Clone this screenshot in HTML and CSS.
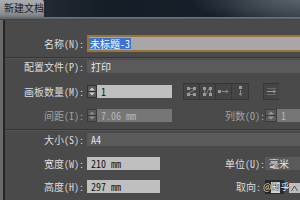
FILE: index.html
```html
<!DOCTYPE html>
<html lang="zh-CN">
<head>
<meta charset="utf-8">
<title>新建文档</title>
<link rel="stylesheet" href="styles.css">
</head>
<body>
<div class="win">
  <div class="titlebar"><div class="tab">新建文档</div></div>
  <div class="frame-top"></div>
  <div class="frame">
    <div class="panel">
      <div class="row row-name">
        <span class="lbl">名称(N):</span>
        <div class="name-field"><span class="sel">未标题-3</span></div>
      </div>
      <div class="sep sep1"></div>
      <div class="row">
        <span class="lbl">配置文件(P):</span>
        <div class="field drop grow">打印</div>
      </div>
      <div class="row row-tall mt10">
        <span class="lbl">画板数量(M):</span>
        <svg class="spin" width="10" height="13" viewBox="0 0 10 13"><rect x="0.5" y="0.5" width="9" height="12" fill="#5a5a5a" stroke="#333"/><path d="M2 5.5L5 2.5L8 5.5Z M2 7.5L5 10.5L8 7.5Z" fill="#cfcfcf"/><path d="M1 6.5H9" stroke="#333"/></svg>
        <div class="field light w75">1</div>
        <div class="btngroup">
          <span class="btn"><svg width="15" height="15" viewBox="0 0 15 15"><g fill="#9a9a9a"><rect x="3" y="3" width="3" height="3"/><rect x="9" y="3" width="3" height="3"/><rect x="3" y="9" width="3" height="3"/><rect x="9" y="9" width="3" height="3"/></g><path d="M6 4.5H9M6 10.5H9M10.5 6L4.5 9" stroke="#7c7c7c" stroke-width="1"/></svg></span>
          <span class="btn"><svg width="15" height="15" viewBox="0 0 15 15"><g fill="#9a9a9a"><rect x="3" y="3" width="3" height="3"/><rect x="9" y="3" width="3" height="3"/><rect x="3" y="9" width="3" height="3"/><rect x="9" y="9" width="3" height="3"/></g><path d="M4.5 6V9M10.5 6V9M6 10.5L9 4.5" stroke="#7c7c7c" stroke-width="1"/></svg></span>
          <span class="btn"><svg width="15" height="15" viewBox="0 0 15 15"><rect x="2" y="6" width="3" height="3" fill="#9a9a9a"/><path d="M6 7.5H11" stroke="#8a8a8a"/><path d="M10 5.5L12.5 7.5L10 9.5Z" fill="#8a8a8a"/></svg></span>
          <span class="btn"><svg width="15" height="15" viewBox="0 0 15 15"><rect x="6" y="2" width="3" height="3" fill="#9a9a9a"/><path d="M7.5 6V10" stroke="#8a8a8a"/><path d="M5.5 9.5L7.5 12L9.5 9.5Z" fill="#8a8a8a"/></svg></span>
        </div>
        <span class="btn single"><svg width="15" height="15" viewBox="0 0 15 15"><path d="M3 4.5H12M3 10.5H12" stroke="#6a6a6a"/><path d="M3 7.5H10" stroke="#9a9a9a"/><path d="M9.5 5.5L12 7.5L9.5 9.5Z" fill="#9a9a9a"/></svg></span>
      </div>
      <div class="row mt9">
        <span class="lbl dim">间距(I):</span>
        <svg class="spin" width="10" height="13" viewBox="0 0 10 13"><rect x="0.5" y="0.5" width="9" height="12" fill="#575757" stroke="#3a3a3a"/><path d="M2 5.5L5 2.5L8 5.5Z M2 7.5L5 10.5L8 7.5Z" fill="#8e8e8e"/><path d="M1 6.5H9" stroke="#3a3a3a"/></svg>
        <div class="field dis w75">7.06 mm</div>
        <div class="right">
          <span class="lbl2 dim">列数(O):</span>
          <svg class="spin" width="12" height="13" viewBox="0 0 12 13"><rect x="0.5" y="0.5" width="11" height="12" fill="#5c5c5c" stroke="#3a3a3a"/><path d="M3 5.5L6 2.5L9 5.5Z M3 7.5L6 10.5L9 7.5Z" fill="#9a9a9a"/><path d="M1 6.5H11" stroke="#3a3a3a"/></svg>
          <div class="field dis grow">1</div>
        </div>
      </div>
      <div class="sep sep2"></div>
      <div class="row">
        <span class="lbl">大小(S):</span>
        <div class="field drop grow">A4</div>
      </div>
      <div class="row mt11">
        <span class="lbl">宽度(W):</span>
        <div class="field light w73">210 mm</div>
        <div class="right">
          <span class="lbl2">单位(U):</span>
          <div class="field drop grow">毫米</div>
        </div>
      </div>
      <div class="row mt10">
        <span class="lbl">高度(H):</span>
        <div class="field light w73">297 mm</div>
        <div class="right right-or">
          <span class="lbl2">取向:</span>
          <svg class="orient" width="35" height="14" viewBox="0 0 35 14"><rect x="0" y="0" width="19" height="14" fill="#2a2a2a"/><rect x="6" y="2" width="9" height="11" fill="#d6d6d6"/><path d="M8 10L10.5 5L13 10" stroke="#444" fill="none"/><path d="M19.5 6H23M19.5 8.5H23" stroke="#cfcfcf"/><rect x="24" y="3" width="11" height="10" fill="#bdbdbd"/><path d="M26.5 11L29.5 6L32.5 11" stroke="#555" fill="none"/></svg>
        </div>
      </div>
      <span class="wm">@知乎</span>
    </div>
  </div>
</div>
</body>
</html>
```

FILE: styles.css
```css
* {
  box-sizing: border-box;
  margin: 0;
  padding: 0;
}

html,
body {
  width: 300px;
  height: 200px;
  overflow: hidden;
  background: #4a4a4a;
}

body {
  font-family: "Noto Sans Mono CJK SC", "Liberation Mono", "Noto Sans CJK SC", monospace;
  font-size: 10px;
  color: #dcdcdc;
}

.win {
  width: 300px;
  height: 200px;
  display: flex;
  flex-direction: column;
}

.titlebar {
  height: 17px;
  flex: none;
  display: flex;
  background:
    radial-gradient(ellipse 110px 26px at 300px 0, #59616a, rgba(89, 97, 106, 0)),
    linear-gradient(90deg, #2c333b, #151d27 35%, #17202a 75%, #2a323a);
}

.tab {
  width: 44px;
  height: 17px;
  background: linear-gradient(#a9adaf, #8f9395 75%, #74787a);
  color: #1c1c1c;
  font-family: "Noto Sans CJK SC", sans-serif;
  font-size: 10px;
  line-height: 15px;
  padding-left: 4px;
  border-top-right-radius: 2px;
}

.frame-top {
  height: 3px;
  flex: none;
  background: linear-gradient(#6e7478, #5c6266 60%, #2e3236);
}

.frame {
  flex: 1;
  display: flex;
  border-left: 3px solid #6a6a6a;
}

.panel {
  position: relative;
  flex: 1;
  display: flex;
  flex-direction: column;
  padding-top: 15px;
  border-left: 2px solid #262626;
}

.row {
  display: flex;
  align-items: center;
  height: 13px;
  flex: none;
}

.row-name {
  height: 17px;
}

.row-tall {
  height: 17px;
}

.mt9 { margin-top: 9px; }
.mt10 { margin-top: 10px; }
.mt11 { margin-top: 11px; }

.lbl {
  flex: none;
  width: 79px;
  margin-right: 3px;
  text-align: right;
  white-space: nowrap;
  line-height: 13px;
}

.lbl2 {
  flex: none;
  white-space: nowrap;
  line-height: 13px;
  text-align: right;
}

.dim {
  color: #a2a2a2;
}

.field {
  height: 13px;
  line-height: 13px;
  padding-left: 4px;
  white-space: nowrap;
  overflow: hidden;
}

.grow { flex: 1; }
.w75 { width: 75px; flex: none; }
.w73 { width: 73px; flex: none; }

.drop {
  background: #5a5a5a;
  color: #e6e6e6;
}

.light {
  background: #bfbfbf;
  color: #151515;
}

.dis {
  background: #767676;
  color: #b6b6b6;
}

.name-field {
  flex: 1;
  height: 17px;
  border: 2px solid #9a7436;
  border-right: none;
  background: #a8a6a6;
  padding-left: 0;
  line-height: 13px;
  white-space: nowrap;
  overflow: hidden;
}

.sel {
  display: inline-block;
  height: 11px;
  margin-top: 1px;
  padding: 0 1px;
  line-height: 11px;
  background: #3c72d6;
  color: #ffffff;
}

.sep {
  flex: none;
  height: 2px;
  border-top: 1px solid #363636;
  border-bottom: 1px solid #545454;
}

.sep1 { margin: 5px 0 1px; }
.sep2 { margin: 7px 0 2px; }

.spin {
  flex: none;
  display: block;
}

.btngroup {
  flex: none;
  display: flex;
  margin-left: 11px;
  height: 17px;
  border: 1px solid #363636;
  background: #454545;
}

.btn {
  display: flex;
  align-items: center;
  justify-content: center;
  width: 16px;
  height: 15px;
  border-right: 1px solid #383838;
}

.btn:last-child {
  border-right: none;
}

.btn svg {
  display: block;
}

.single {
  flex: none;
  width: 16px;
  height: 17px;
  margin-left: 14px;
  border: 1px solid #363636;
  background: #454545;
}

.right {
  flex: none;
  display: flex;
  align-items: center;
  width: 75px;
  margin-left: auto;
}

.right .lbl2 {
  width: 40px;
}

.right-or {
  width: 64px;
}

.right-or .lbl2 {
  width: 25px;
  margin-right: 4px;
}

.orient {
  display: block;
  flex: none;
}

.wm {
  position: absolute;
  left: 258px;
  top: 161px;
  font-family: "Noto Sans CJK SC", sans-serif;
  font-size: 9px;
  line-height: 12px;
  color: #ffffff;
  text-shadow: 0 0 1px #000, 0 0 1px #000;
}
```
